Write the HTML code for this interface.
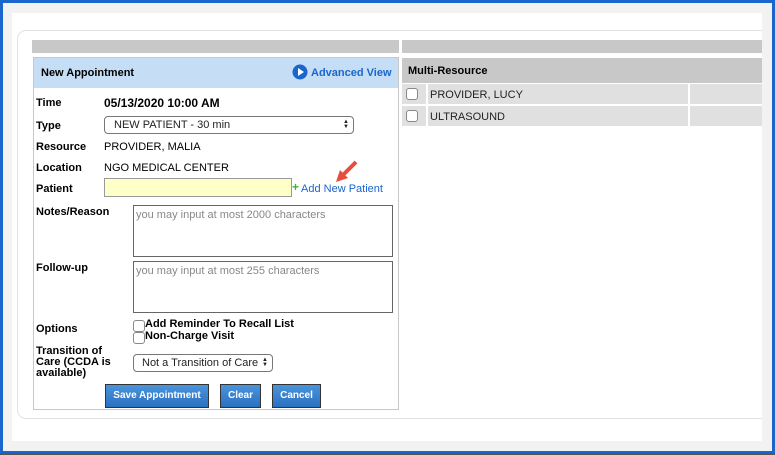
<!DOCTYPE html>
<html><head><style>
*{box-sizing:border-box;margin:0;padding:0}
body{width:775px;height:455px;overflow:hidden;background:#555;font-family:"Liberation Sans",Arial,sans-serif;font-size:11px;color:#000;position:relative}
.a{position:absolute}
.lbl{position:absolute;left:36px;font-weight:bold}
.btn{position:absolute;top:384px;height:24px;border:1px solid #333;background:linear-gradient(#4a94dc,#2a70c0);color:#fff;font-weight:bold;font-size:10px;text-align:center;line-height:22px}
.cb{position:absolute;width:12px;height:12px;border:1px solid #888;border-radius:3px;background:#fff}
.arr{position:absolute;right:4px;top:3px;font-size:6px;line-height:5px;color:#222}
</style></head><body>
<div class="a" style="left:0;top:0;width:775px;height:453px;background:#1a66cc"></div>
<div class="a" style="left:3px;top:3px;width:769px;height:448px;background:#f2f2f2"></div>
<div class="a" style="left:12px;top:13px;width:750px;height:428px;background:#fff;overflow:hidden">
<div class="a" style="left:5px;top:17px;width:800px;height:389px;border:1px solid #e2e2e2;border-radius:9px"></div>
</div>
<div class="a" style="left:32px;top:40px;width:367px;height:13px;background:#c8c8c8"></div>
<div class="a" style="left:402px;top:40px;width:360px;height:13px;background:#c8c8c8"></div>
<div class="a" style="left:33px;top:57px;width:366px;height:353px;border:1px solid #c8c8c8;background:#fff"></div>
<div class="a" style="left:34px;top:58px;width:364px;height:30px;background:#c5ddf5"></div>
<div class="a" style="left:41px;top:67px;font-weight:bold">New Appointment</div>
<svg class="a" style="left:292px;top:64px" width="16" height="16"><circle cx="8" cy="8" r="7.5" fill="#1a66cc"/><path d="M6 4L12 8L6 12Z" fill="#fff"/></svg>
<div class="a" style="left:311px;top:67px;font-weight:bold;color:#1a66cc">Advanced View</div>
<div class="lbl" style="top:97px">Time</div><div class="a" style="left:104px;top:96px;font-weight:bold;font-size:12px">05/13/2020 10:00 AM</div>
<div class="lbl" style="top:120px">Type</div>
<div class="a" style="left:104px;top:116px;width:250px;height:18px;border:1px solid #777;border-radius:4px;padding-left:9px;line-height:16px;color:#222">NEW PATIENT - 30 min<span class="arr">&#9650;<br>&#9660;</span></div>
<div class="lbl" style="top:141px">Resource</div><div class="a" style="left:104px;top:141px">PROVIDER, MALIA</div>
<div class="lbl" style="top:162px">Location</div><div class="a" style="left:104px;top:162px">NGO MEDICAL CENTER</div>
<div class="lbl" style="top:183px">Patient</div>
<div class="a" style="left:104px;top:178px;width:188px;height:19px;border:1px solid #999;background:#ffffc8"></div>
<div class="a" style="left:292px;top:180px;color:#3cb33c;font-weight:bold;font-size:12px">+</div>
<div class="a" style="left:301px;top:183px;color:#1a66cc">Add New Patient</div>
<svg class="a" style="left:332px;top:158px" width="30" height="28"><path d="M24 4L10 18" stroke="#e84c3d" stroke-width="4"/><path d="M4 24L8 12L16 20Z" fill="#e84c3d"/></svg>
<div class="lbl" style="top:206px">Notes/Reason</div>
<div class="a" style="left:133px;top:205px;width:260px;height:52px;border:1px solid #666;padding:3px 2px;color:#888">you may input at most 2000 characters</div>
<div class="lbl" style="top:262px">Follow-up</div>
<div class="a" style="left:133px;top:261px;width:260px;height:52px;border:1px solid #666;padding:3px 2px;color:#888">you may input at most 255 characters</div>
<div class="lbl" style="top:323px">Options</div>
<div class="cb" style="left:133px;top:320px"></div><div class="a" style="left:145px;top:318px;font-weight:bold">Add Reminder To Recall List</div>
<div class="cb" style="left:133px;top:332px"></div><div class="a" style="left:145px;top:330px;font-weight:bold">Non-Charge Visit</div>
<div class="lbl" style="top:346px;line-height:11px">Transition of<br>Care (CCDA is<br>available)</div>
<div class="a" style="left:133px;top:354px;width:140px;height:18px;border:1px solid #777;border-radius:4px;padding-left:8px;line-height:16px;color:#222">Not a Transition of Care<span class="arr">&#9650;<br>&#9660;</span></div>
<div class="btn" style="left:105px;width:104px">Save Appointment</div>
<div class="btn" style="left:220px;width:41px">Clear</div>
<div class="btn" style="left:272px;width:49px">Cancel</div>
<div class="a" style="left:402px;top:58px;width:360px;height:25px;background:#c8c8c8"></div>
<div class="a" style="left:408px;top:65px;font-weight:bold">Multi-Resource</div>
<div class="a" style="left:402px;top:84px;width:24px;height:20px;background:#e0e0e0"></div>
<div class="a" style="left:428px;top:84px;width:260px;height:20px;background:#e0e0e0"></div>
<div class="a" style="left:690px;top:84px;width:72px;height:20px;background:#e0e0e0"></div>
<div class="a" style="left:402px;top:106px;width:24px;height:20px;background:#e0e0e0"></div>
<div class="a" style="left:428px;top:106px;width:260px;height:20px;background:#e0e0e0"></div>
<div class="a" style="left:690px;top:106px;width:72px;height:20px;background:#e0e0e0"></div>
<div class="cb" style="left:406px;top:88px"></div><div class="cb" style="left:406px;top:110px"></div>
<div class="a" style="left:430px;top:89px;color:#222">PROVIDER, LUCY</div>
<div class="a" style="left:430px;top:111px;color:#222">ULTRASOUND</div>
</body></html>
